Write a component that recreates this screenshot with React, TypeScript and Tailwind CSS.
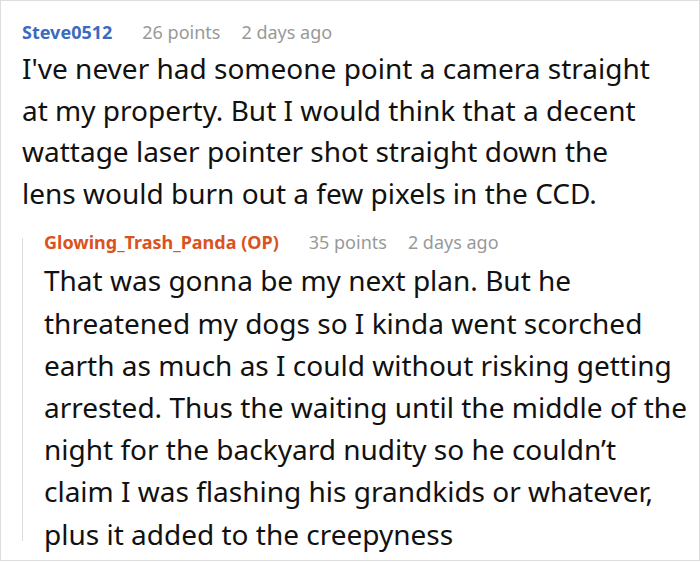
import React from "react";

const body1 = [
  "I've never had someone point a camera straight",
  "at my property. But I would think that a decent",
  "wattage laser pointer shot straight down the",
  "lens would burn out a few pixels in the CCD.",
];

const body2 = [
  "That was gonna be my next plan. But he",
  "threatened my dogs so I kinda went scorched",
  "earth as much as I could without risking getting",
  "arrested. Thus the waiting until the middle of the",
  "night for the backyard nudity so he couldn\u2019t",
  "claim I was flashing his grandkids or whatever,",
  "plus it added to the creepyness",
];

export default function App() {
  return (
    <div
      className="w-[700px] h-[561px] bg-white border border-[#dedede] overflow-hidden text-[#111]"
      style={{ fontFamily: '"Noto Sans", "Open Sans", sans-serif' }}
    >
      <div className="pl-[21px] pt-[18px]">
        <div className="flex items-center text-[18px] leading-[26px] [font-stretch:condensed]">
          <span className="font-bold text-[#3a6bbf]">Steve0512</span>
          <span className="text-[#999] ml-[30px]">26 points</span>
          <span className="text-[#999] ml-[21px]">2 days ago</span>
        </div>
        <div className="mt-[3px] text-[28px] leading-[41.6px] [font-stretch:condensed]">
          {body1.map((l, i) => (
            <div key={i}>{l}</div>
          ))}
        </div>
      </div>
      <div className="flex mt-[15px] ml-[21px]">
        <div className="w-px bg-[#dddddd] mt-[9px] h-[303px]" />
        <div className="pl-[21px]">
          <div className="flex items-center text-[18px] leading-[26px] [font-stretch:condensed]">
            <span className="font-bold text-[#d9531e]">Glowing_Trash_Panda (OP)</span>
            <span className="text-[#999] ml-[30px]">35 points</span>
            <span className="text-[#999] ml-[21px]">2 days ago</span>
          </div>
          <div className="mt-[4px] text-[28px] leading-[42.2px] [font-stretch:condensed]">
            {body2.map((l, i) => (
              <div key={i}>{l}</div>
            ))}
          </div>
        </div>
      </div>
    </div>
  );
}
